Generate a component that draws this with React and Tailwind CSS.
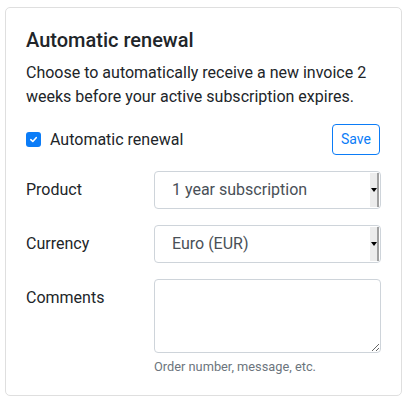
import React from "react";

function SelectBox({ value }) {
  return (
    <div className="relative flex h-[38px] w-[227px] items-center rounded-[4px] border border-[#ced4da] bg-white pl-[17px] text-[16px] text-[#495057]">
      <span>{value}</span>
      <div className="absolute right-[1px] top-[1px] bottom-[1px] flex w-[9px] items-center justify-center border-r-2 border-[#a0a0a0] bg-[#ececec]">
        <div className="h-0 w-0 border-x-[3px] border-t-[4px] border-x-transparent border-t-black" />
      </div>
    </div>
  );
}

export default function App() {
  return (
    <div className="h-[409px] w-[409px] bg-white pl-[5px] pt-[7px]" style={{ fontFamily: "Roboto, 'Liberation Sans', sans-serif" }}>
      <div className="flex w-[397px] flex-col rounded-[5px] border border-[#dfdfdf] px-[20px] pt-[20px] pb-[19px] text-[#212529]">
        <h2 className="text-[20px] font-medium leading-[24px]">Automatic renewal</h2>
        <p className="mt-[9px] text-[16px] leading-[24px]">
          Choose to automatically receive a new invoice 2 weeks before your active subscription expires.
        </p>
        <div className="mt-[15px] flex h-[31px] items-center justify-between">
          <label className="flex items-center gap-[9px] text-[16px]">
            <span className="flex h-[15px] w-[15px] items-center justify-center rounded-[3px] bg-[#0b7cf7]">
              <svg width="9" height="9" viewBox="0 0 10 10" fill="none">
                <path d="M2 5.2 L4.2 7.2 L8 3" stroke="white" strokeWidth="1.8" strokeLinecap="round" strokeLinejoin="round" />
              </svg>
            </span>
            <span>Automatic renewal</span>
          </label>
          <button className="mr-[1px] h-[31px] w-[48px] rounded-[4px] border border-[#0b7cf7] text-[14px] text-[#0b7cf7]">
            Save
          </button>
        </div>
        <div className="mt-[16px] flex items-center">
          <div className="w-[128px] text-[16px]">Product</div>
          <SelectBox value="1 year subscription" />
        </div>
        <div className="mt-[16px] flex items-center">
          <div className="w-[128px] text-[16px]">Currency</div>
          <SelectBox value="Euro (EUR)" />
        </div>
        <div className="mt-[16px] flex items-start">
          <div className="w-[128px] pt-[7px] text-[16px] leading-[24px]">Comments</div>
          <div className="flex flex-col">
            <textarea className="h-[74px] w-[227px] rounded-[4px] border border-[#ced4da] bg-white" />
            <div className="mt-[4px] text-[12.8px] leading-[19px] text-[#6c757d]">Order number, message, etc.</div>
          </div>
        </div>
      </div>
    </div>
  );
}
